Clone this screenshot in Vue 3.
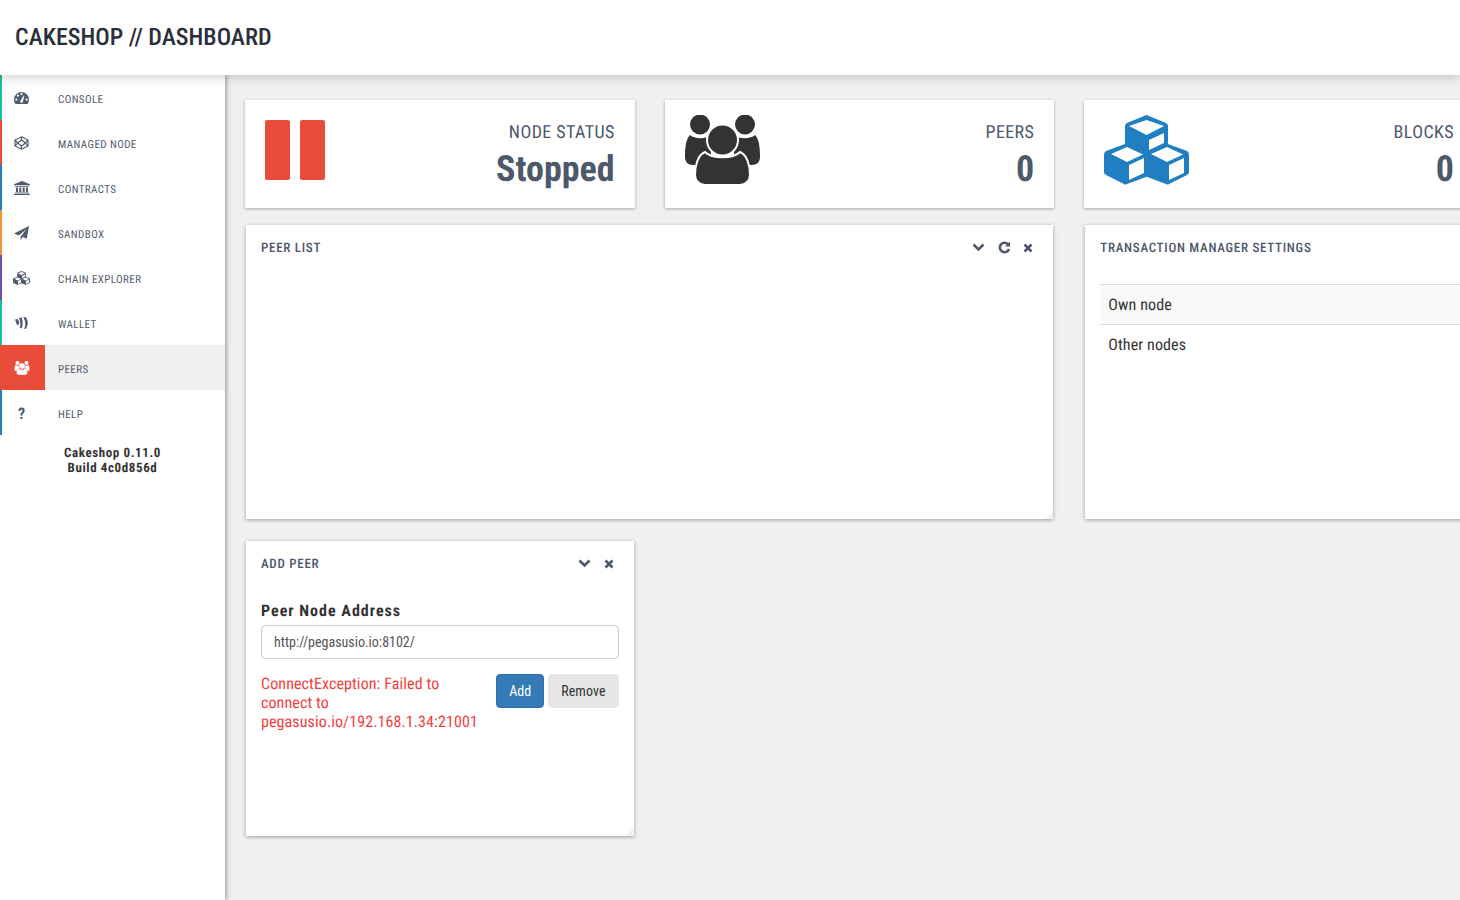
<template>
  <div class="pagina">
    <header class="topo">
      <h1>CAKESHOP // DASHBOARD</h1>
    </header>

    <div class="corpo">
      <aside class="sidebar">
        <ul class="menu">
          <li
            v-for="item in itens"
            :key="item.nome"
            class="item"
            :class="{ ativo: item.ativo }"
            :style="{ '--cor': item.cor }"
          >
            <span class="icone">
              <svg v-if="item.icone === 'console'" width="15" height="12" viewBox="0 0 15 12">
                <path fill-rule="evenodd" d="M7.500 0A7.500 7.500 0 0 0 0 7.500C0 9 .4 10.400 1.100 11.500Q1.400 12 2 12H13Q13.600 12 13.900 11.500C14.600 10.400 15 9 15 7.500A7.500 7.500 0 0 0 7.500 0ZM2.300 8.700a1.100 1.100 0 1 1 0-2.200 1.100 1.100 0 0 1 0 2.200ZM4 4.800a1.100 1.100 0 1 1 0-2.200 1.100 1.100 0 0 1 0 2.200ZM7.500 3.200a1.100 1.100 0 1 1 0-2.200 1.100 1.100 0 0 1 0 2.200ZM8.800 10.300a1.500 1.500 0 0 1-2.600-1.100L9.800 3.500 10.300 3.800ZM12.700 8.700a1.100 1.100 0 1 1 0-2.200 1.100 1.100 0 0 1 0 2.200Z" />
              </svg>
              <svg v-else-if="item.icone === 'node'" width="15" height="14" viewBox="0 0 15 14">
                <g fill="none" stroke="currentColor" stroke-width="1.200">
                  <path d="M7.500 .8 14 4V10L7.500 13.200 1 10V4Z" />
                  <path d="M7.500 3.800 11.300 7 7.500 10.200 3.700 7Z" />
                  <path d="M1 4 3.700 7 1 10M14 4 11.300 7 14 10M7.500 .8V3.800M7.500 10.200V13.200" />
                </g>
              </svg>
              <svg v-else-if="item.icone === 'contracts'" width="16" height="14" viewBox="0 0 16 14">
                <path d="M8 0 16 3.200V4.300H0V3.200ZM1 5h14v.8H1ZM2 6.500h2v4.500H2ZM5.300 6.500h2v4.500h-2ZM8.700 6.500h2v4.500h-2ZM12 6.500h2v4.500h-2ZM1 11.500h14v1H1ZM0 13h16v1H0Z" />
              </svg>
              <svg v-else-if="item.icone === 'sandbox'" width="15" height="14" viewBox="0 0 15 14">
                <path d="M15 0 12.800 12.800 8.700 11 6.500 14V10.700L12.500 3 4.800 9.400 0 7.500Z" />
              </svg>
              <svg v-else-if="item.icone === 'explorer'" width="17" height="14" viewBox="0 0 85 70">
                <path fill-rule="evenodd" :d="cubos" />
              </svg>
              <svg v-else-if="item.icone === 'wallet'" class="carteira" width="13" height="12" viewBox="0 0 13 12">
                <path d="M0 2.500 2.800 2 4.300 5 3.400 8.500 1.800 7.500ZM4 .9 6.600 .3C8 3.500 8 8 6.700 11.500L4.800 10.800C5.800 7.800 5.400 3.800 4 .9ZM8.200 .4 10.600 0C13.500 3.500 13.500 8.500 10.800 12L9 11.600C11 8.500 10.500 3.500 8.200 .4Z" />
              </svg>
              <svg v-else-if="item.icone === 'peers'" class="pessoas" width="16" height="14" viewBox="0 0 75 70">
                <circle cx="15" cy="9.500" r="10" /><circle cx="60" cy="9.500" r="10" />
                <path :d="ladoPessoas" />
                <circle class="frente" cx="37.500" cy="25" r="15.500" />
                <path class="frente" :d="corpoPessoa" />
              </svg>
              <span v-else class="interrogacao">?</span>
            </span>
            <span class="rotulo">{{ item.nome }}</span>
          </li>
        </ul>
        <p class="versao">Cakeshop 0.11.0<br />Build 4c0d856d</p>
      </aside>

      <main class="conteudo">
        <section class="cartoes">
          <article class="cartao">
            <div class="pausa"><span></span><span></span></div>
            <div class="cartao-texto">
              <span class="cartao-titulo">NODE STATUS</span>
              <strong class="cartao-valor">Stopped</strong>
            </div>
          </article>

          <article class="cartao">
            <svg class="icone-peers pessoas" width="75" height="70" viewBox="0 0 75 70">
              <circle cx="15" cy="9.500" r="10" /><circle cx="60" cy="9.500" r="10" />
              <path :d="ladoPessoas" />
              <circle class="frente" cx="37.500" cy="25" r="15.500" />
              <path class="frente" :d="corpoPessoa" />
            </svg>
            <div class="cartao-texto">
              <span class="cartao-titulo">PEERS</span>
              <strong class="cartao-valor">0</strong>
            </div>
          </article>

          <article class="cartao">
            <svg class="icone-blocos" width="85" height="70" viewBox="0 0 85 70">
              <path fill-rule="evenodd" :d="cubos" />
            </svg>
            <div class="cartao-texto">
              <span class="cartao-titulo">BLOCKS</span>
              <strong class="cartao-valor">0</strong>
            </div>
          </article>
        </section>

        <section class="paineis">
          <article class="painel painel-largo">
            <div class="painel-topo">
              <h2>PEER LIST</h2>
              <div class="acoes">
                <svg class="seta" width="13" height="9" viewBox="0 0 13 9"><path d="M1.500 1.500 6.500 6.500 11.500 1.500" /></svg>
                <svg class="recarregar" width="13" height="13" viewBox="0 0 13 13">
                  <path d="M10 3.300A4.700 4.700 0 1 0 11 8" /><path class="cheio" d="M12 .5V5.500H7Z" />
                </svg>
                <svg class="fechar" width="10" height="10" viewBox="0 0 10 10"><path d="M1.500 1.500 8.500 8.500M8.500 1.500 1.500 8.500" /></svg>
              </div>
            </div>
          </article>

          <article class="painel">
            <div class="painel-topo">
              <h2>TRANSACTION MANAGER SETTINGS</h2>
            </div>
            <ul class="opcoes">
              <li class="marcada">Own node</li>
              <li>Other nodes</li>
            </ul>
          </article>

          <article class="painel painel-peer">
            <div class="painel-topo">
              <h2>ADD PEER</h2>
              <div class="acoes">
                <svg class="seta" width="13" height="9" viewBox="0 0 13 9"><path d="M1.500 1.500 6.500 6.500 11.500 1.500" /></svg>
                <svg class="fechar" width="10" height="10" viewBox="0 0 10 10"><path d="M1.500 1.500 8.500 8.500M8.500 1.500 1.500 8.500" /></svg>
              </div>
            </div>
            <div class="formulario">
              <label for="endereco">Peer Node Address</label>
              <input id="endereco" type="text" value="http://pegasusio.io:8102/" />
              <div class="linha-erro">
                <p class="erro">ConnectException: Failed to connect to pegasusio.io/192.168.1.34:21001</p>
                <div class="botoes">
                  <button type="button" class="adicionar">Add</button>
                  <button type="button" class="remover">Remove</button>
                </div>
              </div>
            </div>
          </article>
        </section>
      </main>
    </div>
  </div>
</template>

<script setup>
const itens = [
  { nome: 'CONSOLE', icone: 'console', cor: '#1abc9c' },
  { nome: 'MANAGED NODE', icone: 'node', cor: '#ea4c3a' },
  { nome: 'CONTRACTS', icone: 'contracts', cor: '#1f7fc0' },
  { nome: 'SANDBOX', icone: 'sandbox', cor: '#f59234' },
  { nome: 'CHAIN EXPLORER', icone: 'explorer', cor: '#6f4fb6' },
  { nome: 'WALLET', icone: 'wallet', cor: '#1abc9c' },
  { nome: 'PEERS', icone: 'peers', cor: '#ea4c3a', ativo: true },
  { nome: 'HELP', icone: 'help', cor: '#1f7fc0' }
]

// Formas repetidas nos icones grandes e nos pequenos
const cubos = 'M42.500 0 62 8Q64 9 64 11V29L83 36Q85 37 85 40V57Q85 59 83 60L65 69Q64 70 62 69L42.700 61.700 23 69Q21 70 20 69L2 60Q0 59 0 57V40Q0 37 2 36L21 29V11Q21 9 23 8ZM42.500 5 25 11 42.500 20 60 11ZM45 25V35L60 28V18ZM23 32 7 39 23 47 39 39.500ZM63 32 47 39 63 47 79 39.500ZM25 50V65L40 58V43ZM65 50V65L80 58V43Z'
const ladoPessoas = 'M5 20C9 24 20 24 26 21V50H8C3 50 0 47 0 42 0 32 1 24 5 20ZM70 20C66 24 55 24 49 21V50H67C72 50 75 47 75 42 75 32 74 24 70 20Z'
const corpoPessoa = 'M20 37C27 44 48 44 55 37 62 40 65 50 65 60 65 66 60 70 55 70H20C15 70 10 66 10 60 10 50 13 40 20 37Z'
</script>

<style>
html,
body {
  margin: 0;
  overflow: hidden;
  background: #f0f0f0;
}
</style>

<style scoped>
.pagina {
  width: 1460px;
  height: 900px;
  overflow: hidden;
  display: flex;
  flex-direction: column;
  font-family: "Roboto Condensed", "Liberation Sans Narrow", Roboto, sans-serif;
  font-stretch: condensed;
  text-rendering: geometricPrecision;
  color: #333;
  background: #f0f0f0;
}
.topo {
  height: 75px;
  flex-shrink: 0;
  box-sizing: border-box;
  background: #fff;
  display: flex;
  align-items: center;
  padding: 0 0 2px 15px;
  box-shadow: 0 2px 10px rgba(0, 0, 0, 0.2);
  position: relative;
  z-index: 2;
}
h1 {
  margin: 0;
  font-size: 24px;
  font-weight: 500;
  color: #2b2f3c;
}
.corpo {
  flex: 1;
  display: flex;
  min-height: 0;
}
.sidebar {
  width: 225px;
  flex-shrink: 0;
  background: #fff;
  box-shadow: 2px 0 4px rgba(0, 0, 0, 0.3);
  position: relative;
  z-index: 1;
}
.menu {
  list-style: none;
  margin: 0;
  padding: 0;
}
.item {
  height: 45px;
  display: flex;
  border-left: 2px solid var(--cor);
  color: #515b6e;
}
.icone {
  width: 43px;
  flex-shrink: 0;
  display: flex;
  align-items: center;
  justify-content: center;
  padding-right: 4px;
  box-sizing: border-box;
}
.icone svg {
  fill: currentColor;
  margin-top: 1px;
}
.pessoas .frente {
  stroke: var(--corte, #fff);
  stroke-width: 2;
}
.item .pessoas {
  --corte: var(--cor);
}
.interrogacao {
  font-size: 16px;
  font-weight: 700;
  margin-top: 1px;
}
.rotulo {
  align-self: center;
  margin: 3px 0 0 13px;
  font-size: 11px;
  letter-spacing: 0.4px;
}
.item.ativo {
  background: #f0f0f0;
}
.item.ativo .icone {
  background: var(--cor);
  color: #fff;
}
.versao {
  margin: 11px 0 0;
  text-align: center;
  font-size: 13px;
  font-weight: 700;
  line-height: 15px;
  letter-spacing: 0.6px;
  color: #333;
}
.conteudo {
  flex: 1;
  min-width: 0;
  padding: 25px 0 0 20px;
}
.cartoes,
.paineis {
  display: grid;
  grid-template-columns: repeat(3, 389.67px);
  column-gap: 30px;
}
.cartao {
  height: 108px;
  box-sizing: border-box;
  background: #fff;
  box-shadow: 0 1px 3px rgba(0, 0, 0, 0.3);
  display: flex;
  justify-content: space-between;
  padding: 15px 20px;
}
.pausa {
  display: flex;
  gap: 10px;
  padding-top: 5px;
}
.pausa span {
  width: 25px;
  height: 60px;
  border-radius: 2px;
  background: #ea4c3a;
}
.icone-peers {
  fill: #333;
}
.icone-blocos {
  fill: #1f7fc0;
}
.cartao-texto {
  display: flex;
  flex-direction: column;
  align-items: flex-end;
  color: #4d586b;
}
.cartao-titulo {
  font-size: 18px;
  line-height: 22px;
  margin-top: 7px;
  letter-spacing: 0.4px;
}
.cartao-valor {
  font-size: 36px;
  line-height: 44px;
  margin-top: 3px;
  font-weight: 700;
}
.paineis {
  margin-top: 17px;
  row-gap: 22px;
}
.painel {
  height: 294px;
  box-sizing: border-box;
  margin: 0 1px;
  background: #fff;
  box-shadow: 0 1px 4px rgba(0, 0, 0, 0.35);
  padding: 0 15px;
  position: relative;
}
/* alca de redimensionar do painel */
.painel::after {
  content: "";
  position: absolute;
  right: 0;
  bottom: 0;
  width: 8px;
  height: 8px;
  background: repeating-conic-gradient(#e2e2e2 0 25%, #fff 0 50%) 0 0 / 2px 2px;
  clip-path: polygon(100% 0, 100% 100%, 0 100%);
}
.painel-largo {
  grid-column: span 2;
}
.painel-peer {
  grid-column: 1;
  height: 295px;
}
.painel-topo {
  height: 45px;
  display: flex;
  align-items: center;
  justify-content: space-between;
}
h2 {
  margin: 1px 0 0;
  font-size: 13px;
  font-weight: 500;
  letter-spacing: 0.72px;
  color: #4d586b;
}
.acoes {
  display: flex;
  align-items: center;
  gap: 12.5px;
  padding-right: 5px;
}
.acoes path {
  fill: none;
  stroke: #4d586b;
  stroke-width: 2.600;
}
.acoes path.cheio {
  fill: #4d586b;
  stroke: none;
}
.opcoes {
  list-style: none;
  margin: 14px -4px 0 0;
  padding: 0;
}
.opcoes li {
  height: 40px;
  display: flex;
  align-items: center;
  padding-left: 8px;
  font-size: 16px;
  letter-spacing: 0.1px;
  border-top: 1px solid #ddd;
  box-sizing: border-box;
}
.opcoes li.marcada {
  background: #f9f9f9;
}
.formulario {
  margin-top: 14px;
}
label {
  display: block;
  font-size: 16px;
  font-weight: 700;
  letter-spacing: 1px;
  line-height: 22px;
  margin-bottom: 3px;
}
input {
  display: block;
  width: 100%;
  height: 34px;
  box-sizing: border-box;
  padding: 0 12px;
  border: 1px solid #ccc;
  border-radius: 4px;
  font: inherit;
  font-size: 14px;
  color: #555;
}
.linha-erro {
  display: flex;
  justify-content: space-between;
  margin-top: 15px;
}
.erro {
  margin: 0;
  width: 225px;
  font-size: 16px;
  line-height: 19px;
  letter-spacing: 0.1px;
  color: #f33d3d;
}
.botoes {
  display: flex;
  gap: 4px;
  align-items: flex-start;
}
button {
  height: 34px;
  border-radius: 4px;
  font: inherit;
  font-size: 14px;
  padding: 0 12px;
}
.adicionar {
  background: #337ab7;
  border: 1px solid #2e6da4;
  color: #fff;
}
.remover {
  background: #e6e6e6;
  border: 1px solid #e6e6e6;
  color: #333;
  letter-spacing: 0.1px;
}
</style>
